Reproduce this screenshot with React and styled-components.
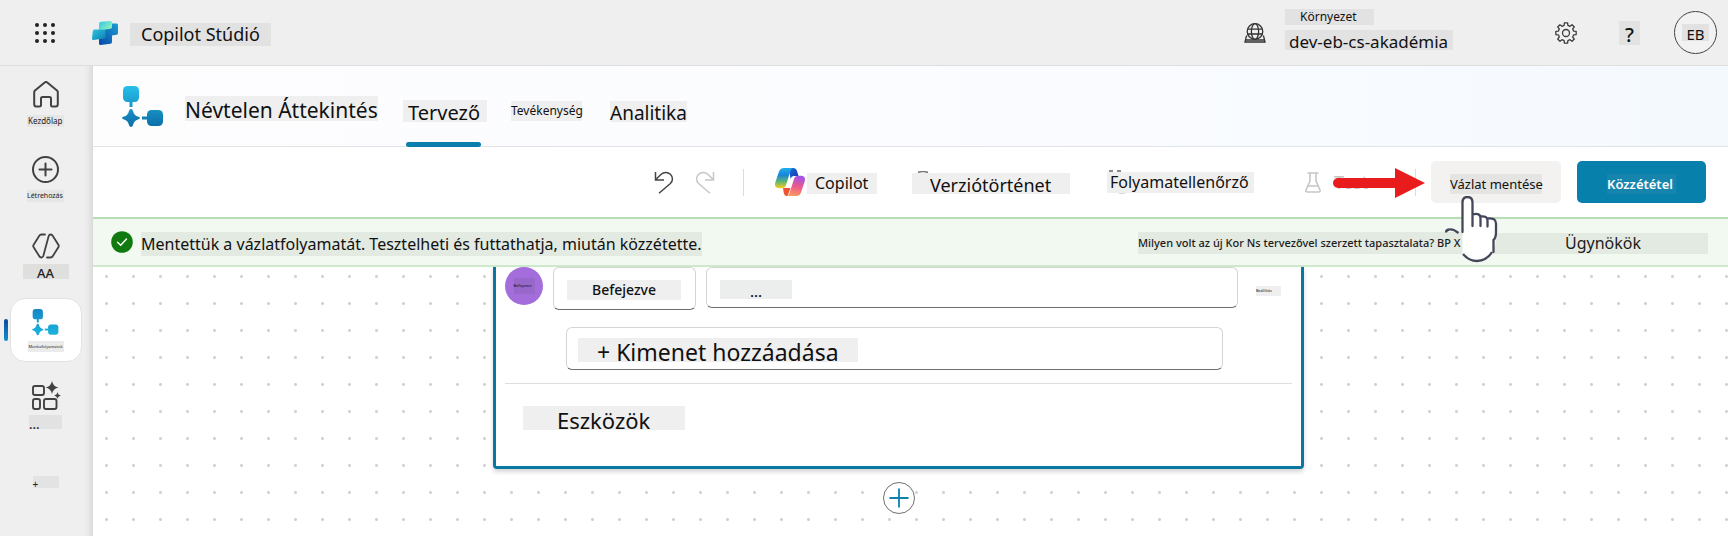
import React from "react";
import styled, { createGlobalStyle } from "styled-components";

const GlobalStyle = createGlobalStyle`
  *, *::before, *::after { box-sizing: border-box; }
  body {
    margin: 0;
    background: #fff;
    color: #111;
    font-family: "Noto Sans", "Open Sans", sans-serif;
  }
  button, input { font: inherit; color: inherit; }
  svg { display: block; flex: none; }
`;

const Page = styled.div`
  min-height: 100vh;
  display: flex;
  flex-direction: column;
  overflow: hidden;
`;

const Chip = styled.span`
  display: block;
  flex: none;
  width: ${(p) => p.$w}px;
  height: ${(p) => p.$h}px;
  line-height: ${(p) => p.$h}px;
  margin-top: ${(p) => (p.$drop ? 3 : 0)}px;
  padding-left: ${(p) => p.$indent || 0}px;
  padding-top: ${(p) => (p.$low ? 2 : 0)}px;
  font-size: ${(p) => p.$size}px;
  font-weight: ${(p) => p.$weight || 400};
  text-align: ${(p) => p.$align || "left"};
  background: ${(p) => p.$tone || "#efefef"};
  white-space: nowrap;
`;

const TopBar = styled.header`
  height: 66px;
  flex: none;
  display: flex;
  align-items: center;
  padding: 0 11px 0 34px;
  background: #efefef;
  border-bottom: 1px solid #dedede;
`;

const IconButton = styled.button`
  display: flex;
  align-items: center;
  justify-content: center;
  flex: none;
  padding: 0;
  border: 0;
  background: none;
  cursor: pointer;
`;

const Brand = styled.a`
  display: flex;
  align-items: center;
  gap: 12px;
  margin-left: 36px;
  color: inherit;
  text-decoration: none;
`;

const TopActions = styled.div`
  display: flex;
  align-items: center;
  margin-left: auto;
`;

const Environment = styled.button`
  display: flex;
  align-items: center;
  gap: 19px;
  width: 209px;
  margin-right: 102px;
  padding: 0;
  border: 0;
  background: none;
  text-align: left;
  cursor: pointer;
`;

const EnvironmentText = styled.span`
  display: flex;
  flex-direction: column;
  gap: 5px;
  margin-top: -6px;
`;

const HelpButton = styled(IconButton)`
  margin: 0 34px 0 42px;
`;

const Avatar = styled.button`
  width: 43px;
  height: 43px;
  display: flex;
  align-items: center;
  justify-content: center;
  padding: 0;
  border: 1px solid #444;
  border-radius: 50%;
  background: #f2f2f2;
`;

const Body = styled.div`
  flex: 1;
  display: flex;
`;

const Rail = styled.nav`
  width: 93px;
  flex: none;
  display: flex;
  flex-direction: column;
  align-items: center;
  padding: 15px 2px 0 0;
  background: linear-gradient(90deg, #efefef 84px, #e9e9e9 88px, #dadada 93px);
`;

const RailItem = styled.a`
  position: relative;
  display: flex;
  flex-direction: column;
  align-items: center;
  justify-content: space-between;
  width: 72px;
  height: ${(p) => p.$h}px;
  margin-bottom: ${(p) => p.$after}px;
  color: #222;
  text-decoration: none;
`;

const ActiveRailItem = styled(RailItem)`
  padding: 10px 0 9px;
  border: 1px solid #e2e2e2;
  border-radius: 15px;
  background: #fff;

  &::before {
    content: "";
    position: absolute;
    left: -7px;
    top: 20px;
    width: 4px;
    height: 22px;
    border-radius: 2px;
    background: linear-gradient(#0b4a9a, #1191cc);
  }
`;

const Main = styled.main`
  flex: 1;
  min-width: 0;
  display: flex;
  flex-direction: column;
`;

const TitleBar = styled.div`
  height: 81px;
  flex: none;
  display: flex;
  align-items: stretch;
  padding-left: 29px;
  background: linear-gradient(90deg, #fdfdfe, #fbfcff 50%, #f4f9fe);
  border-bottom: 1px solid #e2e3e6;
`;

const Title = styled.h1`
  display: flex;
  align-items: center;
  gap: 21px;
  margin: 0 25px 0 0;
  padding-top: 2px;
`;

const Tab = styled.a`
  display: flex;
  align-items: center;
  position: relative;
  margin-right: ${(p) => p.$after || 0}px;
  padding-top: 10px;
  color: inherit;
  text-decoration: none;

  &::after {
    content: "";
    display: ${(p) => (p.$active ? "block" : "none")};
    position: absolute;
    left: 3px;
    right: 6px;
    bottom: -1px;
    height: 5px;
    border-radius: 3px;
    background: #0b7fab;
  }
`;

const Toolbar = styled.div`
  position: relative;
  z-index: 2;
  height: 70px;
  flex: none;
  display: flex;
  align-items: center;
  justify-content: flex-end;
  padding-right: 22px;
`;

const ToolButton = styled(IconButton)`
  gap: ${(p) => p.$gap || 0}px;
  margin-right: ${(p) => p.$after}px;
`;

const Separator = styled.span`
  width: 1px;
  height: 27px;
  flex: none;
  margin-right: ${(p) => p.$after}px;
  background: #dcdcdc;
`;

const Veil = styled.span`
  display: flex;
  position: relative;
  margin-left: -25px;
`;

const TestText = styled.span`
  width: 47px;
  margin-left: 13px;
  text-align: left;
  font-size: 18px;
  line-height: 22px;
  color: #c4c4c4;
`;

const ActionButton = styled.button`
  height: 42px;
  flex: none;
  display: flex;
  align-items: center;
  justify-content: center;
  width: ${(p) => (p.$primary ? 129 : 130)}px;
  padding: 0;
  border: 0;
  border-radius: 5px;
  background: ${(p) => (p.$primary ? "#0880ac" : "#f3f2f1")};
  color: ${(p) => (p.$primary ? "#fff" : "#111")};
  cursor: pointer;
`;

const SaveSpot = styled.div`
  position: relative;
  margin-right: 16px;
`;

const ArrowMark = styled.svg`
  position: absolute;
  right: 136px;
  top: 7px;
  pointer-events: none;
`;

const HandMark = styled.svg`
  position: absolute;
  left: 13px;
  top: 35px;
  pointer-events: none;
`;

const Banner = styled.div`
  height: 50px;
  flex: none;
  display: flex;
  align-items: center;
  padding: 0 20px 0 18px;
  background: #f1f9f1;
  border-top: 2px solid #b4dfb6;
  border-bottom: 2px solid #cdeacd;
`;

const BannerText = styled.p`
  display: flex;
  margin: 3px 0 0 8px;
`;

const BannerLinks = styled.div`
  display: flex;
  align-items: center;
  gap: 27px;
  margin-left: auto;
  padding-top: 2px;

  a { color: #1c1c1c; text-decoration: none; }
`;

const Canvas = styled.section`
  flex: 1;
  display: flex;
  flex-direction: column;
  align-items: center;
  padding-right: 24px;
  padding-bottom: 16px;
  background-color: #fff;
  background-image: radial-gradient(circle, #d2d2d2 1px, transparent 2px);
  background-size: 27px 27px;
  background-position: 0 -4px;
`;

const Card = styled.div`
  width: 811px;
  max-width: 100%;
  padding: 0 9px 36px;
  border: solid #0a77a3;
  border-width: 0 3px 3px;
  border-radius: 0 0 4px 4px;
  background: #fff;
  box-shadow: 0 3px 4px rgba(0, 0, 0, 0.16);
`;

const OutputRow = styled.div`
  display: flex;
  align-items: flex-start;
`;

const TypeBadge = styled.span`
  width: 38px;
  height: 38px;
  flex: none;
  display: flex;
  align-items: center;
  justify-content: center;
  margin-right: 10px;
  border-radius: 50%;
  background: #a36edb;
`;

const Outline = styled.div`
  display: flex;
  align-items: center;
  padding: 0 13px;
  border: 1px solid #d4d4d4;
  border-bottom-color: #6e6e6e;
  border-radius: 6px;
  background: #fff;
`;

const NameButton = styled(Outline).attrs({ as: "button", type: "button" })`
  width: 143px;
  height: 43px;
  margin-right: 10px;
`;

const ValueField = styled(Outline).attrs({ as: "label" })`
  flex: 1;
  height: 41px;
  margin-right: 18px;
  padding-top: 4px;
`;

const ValueInput = styled.input`
  width: 72px;
  height: 19px;
  padding: 3px 0 0;
  border: 0;
  background: #eceeee;
  font-size: 15px;
  font-weight: 500;
  line-height: 16px;
  text-align: center;
`;

const MoreButton = styled(IconButton)`
  margin: 19px 11px 0 0;
`;

const AddOutput = styled(Outline).attrs({ as: "button", type: "button" })`
  width: calc(100% - 130px);
  height: 43px;
  margin: 17px 0 0 61px;
  padding: 0 11px;
`;

const Rule = styled.hr`
  height: 1px;
  margin: 13px 0 22px;
  border: 0;
  background: #dedede;
`;

const CardHeading = styled.h2`
  display: flex;
  margin: 0 0 0 18px;
`;

const AddStep = styled(IconButton)`
  width: 32px;
  height: 32px;
  margin-top: 13px;
  border: 1px solid #707070;
  border-radius: 50%;
  background: #fff;
`;

const Waffle = () => (
  <svg width="22" height="22" viewBox="0 0 22 22" fill="#222">
    {[3, 11, 19].map((y) => [3, 11, 19].map((x) => <circle key={`${x}-${y}`} cx={x} cy={y} r="2" />))}
  </svg>
);

const StudioLogo = () => (
  <svg width="26" height="24" viewBox="0 0 26 24">
    <defs>
      <linearGradient id="sA" x1="0" y1="0" x2="1" y2="0.6">
        <stop offset="0" stopColor="#2fc4e8" /><stop offset="1" stopColor="#8cf0c0" />
      </linearGradient>
      <linearGradient id="sB" x1="0" y1="0" x2="1" y2="1">
        <stop offset="0" stopColor="#2bc4e2" /><stop offset="1" stopColor="#0f7fae" />
      </linearGradient>
      <linearGradient id="sC" x1="0" y1="1" x2="1" y2="0">
        <stop offset="0" stopColor="#0846a8" /><stop offset="1" stopColor="#1a9fd2" />
      </linearGradient>
    </defs>
    <path d="M18 2.500h6.500q1.500 0 1.500 1.500v8q0 1.500-1.500 1.800l-4.500.7v6.500q0 1.500-1.500 1.800L8.500 24Q7 24 7 22.500V8z" fill="url(#sC)" />
    <path d="M2.500 8.500H12q1.500 0 1.500 1.500v6q0 1.300-1.500 1.600L1.500 19Q0 19.200 0 17.500l.8-7.500q.2-1.500 1.700-1.500z" fill="url(#sB)" />
    <path d="M9 .8L18.500 0Q20 0 20 1.500V6q0 1.500-1.500 1.800L12 8.700H6.800l.4-6.400Q7.300.9 9 .8z" fill="url(#sA)" />
  </svg>
);

const Globe = () => (
  <svg width="22" height="20" viewBox="0 0 22 20" fill="none" stroke="#333" strokeWidth="1.300">
    <circle cx="11" cy="8.500" r="7.800" />
    <ellipse cx="11" cy="8.500" rx="3.600" ry="7.800" />
    <path d="M3.500 6.200h15M3.500 11h15M3.200 13.200H2.400L1 19h20l-1.400-5.800h-.8M1.300 17h19.400" />
  </svg>
);

const Gear = () => {
  const pts = [];
  for (let i = 0; i < 8; i += 1) {
    [[-14, 7.8], [-9, 10.300], [9, 10.300], [14, 7.8]].forEach(([d, r]) => {
      const a = ((i * 45 + d) * Math.PI) / 180;
      pts.push(`${(11 + r * Math.sin(a)).toFixed(2)},${(11 - r * Math.cos(a)).toFixed(2)}`);
    });
  }
  return (
    <svg width="22" height="22" viewBox="0 0 22 22" fill="none" stroke="#3c3c3c" strokeWidth="1.300" strokeLinejoin="round">
      <polygon points={pts.join(" ")} />
      <circle cx="11" cy="11" r="3.500" />
    </svg>
  );
};

const Home = () => (
  <svg width="26" height="27" viewBox="0 0 26 27" fill="none" stroke="#424242" strokeWidth="2" strokeLinejoin="round">
    <path d="M1.200 11.200q0-1 .8-1.700L11.700 1.500q1.300-1 2.600 0L24 9.500q.8.700.8 1.700V23q0 2.500-2 2.500h-3.300q-1.500 0-1.500-1.500v-6.500q0-1.500-1.500-1.500h-7Q8 16 8 17.500V24q0 1.500-1.500 1.500H3.200q-2 0-2-2.500z" />
  </svg>
);

const PlusCircle = () => (
  <svg width="27" height="27" viewBox="0 0 27 27" fill="none" stroke="#424242" strokeWidth="2" strokeLinecap="round">
    <circle cx="13.500" cy="13.500" r="12.500" />
    <path d="M13.500 7.500v12M7.500 13.500h12" />
  </svg>
);

const Agents = () => (
  <svg width="28" height="26" viewBox="0 0 28 26" fill="none" stroke="#424242" strokeWidth="1.800" strokeLinejoin="round" strokeLinecap="round">
    <path d="M13 1.500H9.500q-1.500 0-2.200 1.300L1.500 12q-.6 1 0 2l5.800 9.200q.7 1.300 2 1.300 1.500 0 2-1.500L16.700 3q.5-1.500 2-1.500 1.300 0 2 1.300l5.800 9.200q.6 1 0 2l-5.800 9.200q-.7 1.300-2.200 1.300H15" />
  </svg>
);

const FlowLogo = ({ size, id, from, to }) => (
  <svg width={size} height={size} viewBox="0 0 42 42">
    <defs>
      <linearGradient id={id} x1="0" y1="0" x2="0" y2="42" gradientUnits="userSpaceOnUse">
        <stop offset="0" stopColor={from} /><stop offset="1" stopColor={to} />
      </linearGradient>
    </defs>
    <g fill={`url(#${id})`}>
      <rect x="1" y="0" width="16" height="16" rx="4.500" />
      <rect x="7.500" y="15" width="3" height="6" />
      <path d="M9 23q1.500 0 2 2c.8 3.300 2.500 5 5 5.600q2 .6 2 1.400t-2 1.400c-2.500.6-4.200 2.300-5 5.600q-.5 2-2 2t-2-2c-.8-3.300-2.500-5-5-5.600q-2-.6-2-1.400t2-1.400c2.500-.6 4.200-2.300 5-5.600q.5-2 2-2z" />
      <rect x="20" y="30.500" width="6" height="3" />
      <rect x="25" y="24" width="16" height="16" rx="4.500" />
    </g>
  </svg>
);

const Tools = () => (
  <svg width="30" height="29" viewBox="0 0 30 29" fill="none" stroke="#424242" strokeWidth="1.900">
    <rect x="2" y="5" width="11" height="9" rx="2" />
    <rect x="2" y="18" width="7" height="10" rx="2" />
    <rect x="13" y="18" width="12.500" height="10" rx="2" />
    <path d="M21 0q1 5.500 6.500 6.500Q22 7.500 21 13q-1-5.500-6.500-6.500Q20 5.500 21 0z" fill="#424242" stroke="none" />
    <path d="M26.500 11q.5 3 3.500 3.500-3 .5-3.500 3.500-.5-3-3.500-3.500 3-.5 3.500-3.500z" fill="#424242" stroke="none" />
  </svg>
);

const Undo = ({ flip }) => (
  <svg width="20" height="23" viewBox="0 0 20 23" fill="none" stroke={flip ? "#c6c6c6" : "#444"} strokeWidth="1.500">
    <path
      transform={flip ? "matrix(-1 0 0 1 20 0)" : undefined}
      d="M1.500 1v8h8.500M1.500 8.800L7.200 3.300C9.500 1 13.500.5 16.400 3.300c2.900 2.900 2.600 6.700 0 9.200L5 22.300"
    />
  </svg>
);

const CopilotLogo = () => (
  <svg width="30" height="28" viewBox="0 0 30 28">
    <defs>
      <linearGradient id="cA" x1="0" y1="0" x2="0" y2="1">
        <stop offset="0" stopColor="#1fb0ec" /><stop offset="0.350" stopColor="#1b84d8" />
        <stop offset="0.650" stopColor="#57b478" /><stop offset="1" stopColor="#f7cf1c" />
      </linearGradient>
      <linearGradient id="cB" x1="0.500" y1="0" x2="0.300" y2="1">
        <stop offset="0" stopColor="#a352ea" /><stop offset="0.500" stopColor="#ea5a8c" /><stop offset="1" stopColor="#fb9a5e" />
      </linearGradient>
      <linearGradient id="cC" x1="0" y1="0" x2="1" y2="1">
        <stop offset="0" stopColor="#1b67dc" /><stop offset="1" stopColor="#1737b0" />
      </linearGradient>
    </defs>
    <path d="M14 0h4q3 0 4 3l1.500 5H19q-2.500 0-3.500 3z" fill="url(#cC)" />
    <path d="M8 20h7.500l-3 8H12q-2.500 0-3.200-3z" fill="#ee5233" />
    <path d="M9 0h9q-1.800.5-2.500 3L11 17q-1 3.200-4.500 3.200H4Q-1 20 .3 14.500L4 3.500Q5.200 0 9 0z" fill="url(#cA)" />
    <path d="M21 28h-9q1.800-.5 2.500-3L19 11q1-3.200 4.500-3.200H26q5 .2 3.700 5.700L26 24.500Q24.800 28 21 28z" fill="url(#cB)" />
  </svg>
);

const History = () => (
  <svg width="24" height="22" viewBox="0 0 24 22" fill="none" stroke="#777" strokeWidth="1.500">
    <path d="M-1 8v5" />
    <path d="M5 1.500q5-2 10 0M6 20q4 2.500 8 0" />
  </svg>
);

const Checker = () => (
  <svg width="24" height="24" viewBox="0 0 24 24" fill="none" stroke="#666" strokeWidth="1.500">
    <path d="M1 1h4M9 1h4M11 22.500h6" />
  </svg>
);

const Beaker = () => (
  <svg width="16" height="21" viewBox="0 0 16 21" fill="none" stroke="#c6c6c6" strokeWidth="1.600" strokeLinejoin="round">
    <path d="M2.500 1h11M5 1v8L1 18q-.5 2 1.500 2h11q2 0 1.500-2L11 9V1M3.500 14h9" />
  </svg>
);

const Check = () => (
  <svg width="22" height="22" viewBox="0 0 22 22">
    <circle cx="11" cy="11" r="10.800" fill="#107a10" />
    <path d="M6.500 11.300l3.200 3L15.500 8" fill="none" stroke="#fff" strokeWidth="1.400" strokeLinecap="round" />
  </svg>
);

const Arrow = () => (
  <ArrowMark width="92" height="30" viewBox="0 0 92 30" fill="#e81c1c" aria-hidden="true">
    <path d="M5 10h57V0l30 15-30 15V20H5a5 5 0 0 1 0-10z" />
  </ArrowMark>
);

const Hand = () => (
  <HandMark width="56" height="68" viewBox="0 0 56 68" aria-hidden="true">
    <path
      d="M18.500 58V6.500q0-5.500 5-5.500t5 5.500V18q4-2 7.500 1.500 4-1 7 2 7-1 9 3V42q0 6-2.500 12-4 10-16 11-8 0-15-7z"
      fill="#fff"
    />
    <path
      d="M18.500 36V6.500q0-5.500 5-5.500t5 5.500V30M28.500 18.500q8-2 8 3.500v8M36.500 20.500q7-1 7 4v6M43.500 22.500q8.500-1 8.500 5V36q0 6-2.500 8v12"
      fill="none" stroke="#44475a" strokeWidth="2.300" strokeLinecap="round"
    />
    <path d="M2 36.500q0-2.500 3-3 4-1 9.500 3.500M19 58q6 7 14 7 10-.5 15-9" fill="none" stroke="#44475a" strokeWidth="2.300" />
  </HandMark>
);

const Plus = () => (
  <svg width="20" height="20" viewBox="0 0 20 20" fill="none" stroke="#0d80b0" strokeWidth="1.800">
    <path d="M10 .5v19M.5 10h19" />
  </svg>
);

const GREY = "#e2e2e2";
const GREEN = "#e3eae2";

export default function App() {
  return (
    <Page>
      <GlobalStyle />
      <TopBar>
        <IconButton type="button" aria-label="Alkalmazásindító"><Waffle /></IconButton>
        <Brand href="#studio">
          <StudioLogo />
          <Chip $w={141} $h={23} $size={18} $indent={11} $tone={GREY} $drop>Copilot Stúdió</Chip>
        </Brand>
        <TopActions>
          <Environment type="button">
            <Globe />
            <EnvironmentText>
              <Chip $w={89} $h={16} $size={12} $indent={15} $tone={GREY}>Környezet</Chip>
              <Chip $w={168} $h={20} $size={17} $indent={4} $tone={GREY} $low>dev-eb-cs-akadémia</Chip>
            </EnvironmentText>
          </Environment>
          <IconButton type="button" aria-label="Beállítások"><Gear /></IconButton>
          <HelpButton type="button">
            <Chip $w={21} $h={24} $size={20} $weight={500} $align="center" $tone={GREY} $low>?</Chip>
          </HelpButton>
          <Avatar type="button">
            <Chip $w={27} $h={17} $size={15} $align="center" $tone={GREY} $low>EB</Chip>
          </Avatar>
        </TopActions>
      </TopBar>

      <Body>
        <Rail>
          <RailItem href="#home" $h={46} $after={29}>
            <Home />
            <Chip $w={37} $h={12} $size={8} $indent={1} $tone="#e6e6e6">Kezdőlap</Chip>
          </RailItem>
          <RailItem href="#create" $h={46} $after={31}>
            <PlusCircle />
            <Chip $w={37} $h={12} $size={7} $tone="#e6e6e6">Létrehozás</Chip>
          </RailItem>
          <RailItem href="#agents" $h={46} $after={19}>
            <Agents />
            <Chip $w={46} $h={15} $size={13} $weight={500} $align="center" $tone="#dfdfdd" $low>AA</Chip>
          </RailItem>
          <ActiveRailItem href="#flows" aria-current="page" $h={64} $after={19}>
            <FlowLogo size={27} id="flowSmall" from="#1587c4" to="#1cb6de" />
            <Chip $w={36} $h={11} $size={4} $align="center" $tone="#ebebeb">Munkafolyamatok</Chip>
          </ActiveRailItem>
          <RailItem href="#tools" $h={48} $after={47}>
            <Tools />
            <Chip $w={33} $h={14} $size={13} $weight={500} $tone="#e2e2e2" $low>...</Chip>
          </RailItem>
          <RailItem href="#more" $h={12} $after={0}>
            <Chip $w={26} $h={12} $size={10} $tone="#e3e3e3" $low>+</Chip>
          </RailItem>
        </Rail>

        <Main>
          <TitleBar>
            <Title>
              <FlowLogo size={42} id="flowLarge" from="#26c0ea" to="#0b6ba6" />
              <Chip $w={193} $h={25} $size={21} $low $drop>Névtelen Áttekintés</Chip>
            </Title>
            <Tab href="#designer" $active $after={24}>
              <Chip $w={84} $h={22} $size={20} $indent={5} $low>Tervező</Chip>
            </Tab>
            <Tab href="#activity" $after={28}>
              <Chip $w={71} $h={20} $size={12}>Tevékenység</Chip>
            </Tab>
            <Tab href="#analytics">
              <Chip $w={77} $h={21} $size={19} $low>Analitika</Chip>
            </Tab>
          </TitleBar>

          <Toolbar>
            <ToolButton type="button" aria-label="Visszavonás" $after={21}><Undo /></ToolButton>
            <ToolButton type="button" aria-label="Mégis" disabled $after={28}><Undo flip /></ToolButton>
            <Separator $after={31} />
            <ToolButton type="button" $gap={2} $after={36}>
              <CopilotLogo />
              <Chip $w={70} $h={21} $size={16} $indent={8} $drop>Copilot</Chip>
            </ToolButton>
            <ToolButton type="button" $after={38}>
              <History />
              <Veil><Chip $w={158} $h={21} $size={18} $indent={18} $low $drop>Verziótörténet</Chip></Veil>
            </ToolButton>
            <ToolButton type="button" $after={51}>
              <Checker />
              <Veil><Chip $w={147} $h={21} $size={16} $indent={3}>Folyamatellenőrző</Chip></Veil>
            </ToolButton>
            <ToolButton type="button" disabled $after={34}>
              <Beaker />
              <TestText>Test</TestText>
            </ToolButton>
            <Separator $after={15} />
            <SaveSpot>
              <ActionButton type="button">
                <Chip $w={92} $h={20} $size={13} $tone="#e4e4e2" $drop>Vázlat mentése</Chip>
              </ActionButton>
              <Arrow />
              <Hand />
            </SaveSpot>
            <ActionButton type="button" $primary>
              <Chip $w={69} $h={20} $size={13} $weight={600} $tone="#1685ae" $drop>Közzététel</Chip>
            </ActionButton>
          </Toolbar>

          <Banner role="status">
            <Check />
            <BannerText>
              <Chip $w={561} $h={24} $size={16} $tone={GREEN}>
                Mentettük a vázlatfolyamatát. Tesztelheti és futtathatja, miután közzétette.
              </Chip>
            </BannerText>
            <BannerLinks>
              <a href="#feedback">
                <Chip $w={329} $h={22} $size={11} $weight={500} $tone={GREEN}>
                  Milyen volt az új Kor Ns tervezővel szerzett tapasztalata? BP X
                </Chip>
              </a>
              <a href="#agents-list">
                <Chip $w={214} $h={21} $size={16} $indent={71} $tone={GREEN}>Ügynökök</Chip>
              </a>
            </BannerLinks>
          </Banner>

          <Canvas>
            <Card>
              <OutputRow>
                <TypeBadge>
                  <Chip $w={21} $h={16} $size={4} $tone="#9867ca">Befejezve</Chip>
                </TypeBadge>
                <NameButton>
                  <Chip $w={114} $h={20} $size={14} $weight={500} $align="center" $drop>Befejezve</Chip>
                </NameButton>
                <ValueField>
                  <ValueInput aria-label="Kimenet értéke" defaultValue="..." />
                </ValueField>
                <MoreButton type="button">
                  <Chip $w={25} $h={10} $size={4}>Beállítás</Chip>
                </MoreButton>
              </OutputRow>
              <AddOutput>
                <Chip $w={280} $h={24} $size={23} $indent={19} $low $drop>+ Kimenet hozzáadása</Chip>
              </AddOutput>
              <Rule />
              <CardHeading>
                <Chip $w={162} $h={24} $size={22} $indent={34} $low>Eszközök</Chip>
              </CardHeading>
            </Card>
            <AddStep type="button" aria-label="Lépés hozzáadása"><Plus /></AddStep>
          </Canvas>
        </Main>
      </Body>
    </Page>
  );
}
